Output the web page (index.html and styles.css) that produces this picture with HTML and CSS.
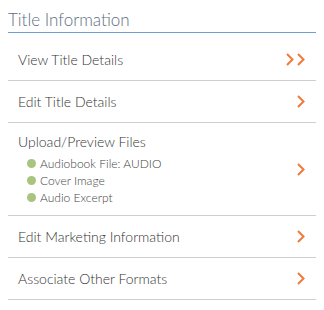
FILE: index.html
```html
<!DOCTYPE html>
<html>
<head>
<meta charset="utf-8">
<link rel="stylesheet" href="styles.css">
</head>
<body>
<div class="panel">
  <h2 class="panel-title">Title Information</h2>
  <ul class="menu">
    <li class="menu-row">
      <span class="menu-label">View Title Details</span>
      <svg class="chev chev-double" width="19" height="13" viewBox="0 0 19 13"><polyline points="1,1 6.5,6.5 1,12" /><polyline points="12,1 17.5,6.5 12,12" /></svg>
    </li>
    <li class="menu-row">
      <span class="menu-label">Edit Title Details</span>
      <svg class="chev" width="8" height="13" viewBox="0 0 8 13"><polyline points="1,1 6.5,6.5 1,12" /></svg>
    </li>
    <li class="menu-row menu-row-tall">
      <div class="menu-body">
        <span class="menu-label">Upload/Preview Files</span>
        <ul class="files">
          <li class="file"><span class="dot"></span>Audiobook File: AUDIO</li>
          <li class="file"><span class="dot"></span>Cover Image</li>
          <li class="file"><span class="dot"></span>Audio Excerpt</li>
        </ul>
      </div>
      <svg class="chev" width="8" height="13" viewBox="0 0 8 13"><polyline points="1,1 6.5,6.5 1,12" /></svg>
    </li>
    <li class="menu-row">
      <span class="menu-label">Edit Marketing Information</span>
      <svg class="chev" width="8" height="13" viewBox="0 0 8 13"><polyline points="1,1 6.5,6.5 1,12" /></svg>
    </li>
    <li class="menu-row">
      <span class="menu-label">Associate Other Formats</span>
      <svg class="chev" width="8" height="13" viewBox="0 0 8 13"><polyline points="1,1 6.5,6.5 1,12" /></svg>
    </li>
  </ul>
</div>
</body>
</html>
```

FILE: styles.css
```css
html, body {
  margin: 0;
  padding: 0;
  background: #ffffff;
}
body {
  font-family: Lato, "Open Sans", "Liberation Sans", sans-serif;
}
.panel {
  padding: 0 8px;
}
.panel-title {
  margin: 0;
  padding-top: 8px;
  font-size: 17px;
  line-height: 24px;
  font-weight: 300;
  color: #5e6e80;
  border-bottom: 1px solid #6d9fd2;
}
.menu {
  list-style: none;
  margin: 6px 0 0 0;
  padding: 0;
}
.menu-row {
  display: flex;
  align-items: center;
  justify-content: space-between;
  min-height: 41px;
  padding: 0 11px 0 10px;
  border-bottom: 1px solid #cfcfcf;
}
.menu-row-tall {
  padding-top: 9px;
  padding-bottom: 9px;
}
.menu-label {
  font-size: 14px;
  line-height: 20px;
  font-weight: 300;
  color: #333333;
}
.menu-body {
  display: flex;
  flex-direction: column;
}
.files {
  list-style: none;
  margin: 3px 0 0 9px;
  padding: 0;
}
.file {
  display: flex;
  align-items: center;
  gap: 4px;
  font-size: 12px;
  line-height: 17px;
  font-weight: 300;
  color: #444444;
}
.dot {
  width: 9px;
  height: 9px;
  border-radius: 50%;
  background: #a9c47f;
}
.chev {
  fill: none;
  stroke: #f2793b;
  stroke-width: 2;
}
```
